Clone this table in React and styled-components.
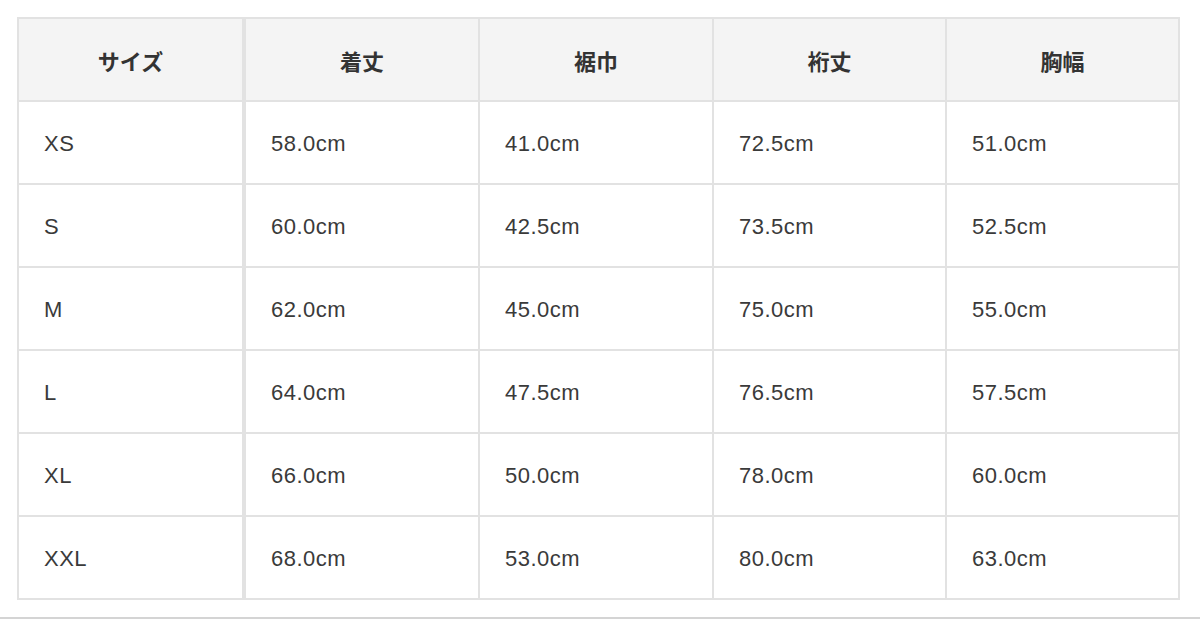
import React from "react";
import styled, { createGlobalStyle } from "styled-components";

const GlobalStyle = createGlobalStyle`
  html, body {
    margin: 0;
    padding: 0;
    background: #ffffff;
  }
`;

const Page = styled.div`
  width: 1200px;
  height: 619px;
  display: flex;
  flex-direction: column;
  overflow: hidden;
  background: #ffffff;
`;

const TableWrap = styled.div`
  padding: 17px 22px 0 17px;
`;

const Table = styled.table`
  width: 1161px;
  border-collapse: collapse;
  table-layout: fixed;
  border: 2px solid #e2e2e2;
  font-family: "Liberation Sans", "Noto Sans CJK JP", sans-serif;
  color: #3a3a3a;
`;

const HeadCell = styled.th`
  height: 81px;
  padding: 0;
  background: #f4f4f4;
  border: 2px solid #e2e2e2;
  border-right-width: ${(p) => (p.$first ? "4px" : "2px")};
  font-family: "Noto Sans CJK JP", sans-serif;
  font-weight: 700;
  font-size: 22px;
  color: #333333;
  text-align: center;
  vertical-align: middle;
`;

const Cell = styled.td`
  height: 79px;
  padding: 2px 0 0 25px;
  border: 2px solid #e2e2e2;
  border-right-width: ${(p) => (p.$first ? "4px" : "2px")};
  font-size: 22px;
  letter-spacing: 0.5px;
  text-align: left;
  vertical-align: middle;
`;

const BottomRule = styled.div`
  margin-top: auto;
  height: 2px;
  background: #d4d4d4;
`;

const headers = ["サイズ", "着丈", "裾巾", "裄丈", "胸幅"];

const rows = [
  ["XS", "58.0cm", "41.0cm", "72.5cm", "51.0cm"],
  ["S", "60.0cm", "42.5cm", "73.5cm", "52.5cm"],
  ["M", "62.0cm", "45.0cm", "75.0cm", "55.0cm"],
  ["L", "64.0cm", "47.5cm", "76.5cm", "57.5cm"],
  ["XL", "66.0cm", "50.0cm", "78.0cm", "60.0cm"],
  ["XXL", "68.0cm", "53.0cm", "80.0cm", "63.0cm"],
];

const colWidths = [226, 235, 234, 233, 233];

export default function App() {
  return (
    <Page>
      <GlobalStyle />
      <TableWrap>
        <Table>
          <colgroup>
            {colWidths.map((w, i) => (
              <col key={i} style={{ width: w }} />
            ))}
          </colgroup>
          <thead>
            <tr>
              {headers.map((h, i) => (
                <HeadCell key={h} $first={i === 0}>
                  {h}
                </HeadCell>
              ))}
            </tr>
          </thead>
          <tbody>
            {rows.map((row) => (
              <tr key={row[0]}>
                {row.map((v, i) => (
                  <Cell key={i} $first={i === 0}>
                    {v}
                  </Cell>
                ))}
              </tr>
            ))}
          </tbody>
        </Table>
      </TableWrap>
      <BottomRule />
    </Page>
  );
}
